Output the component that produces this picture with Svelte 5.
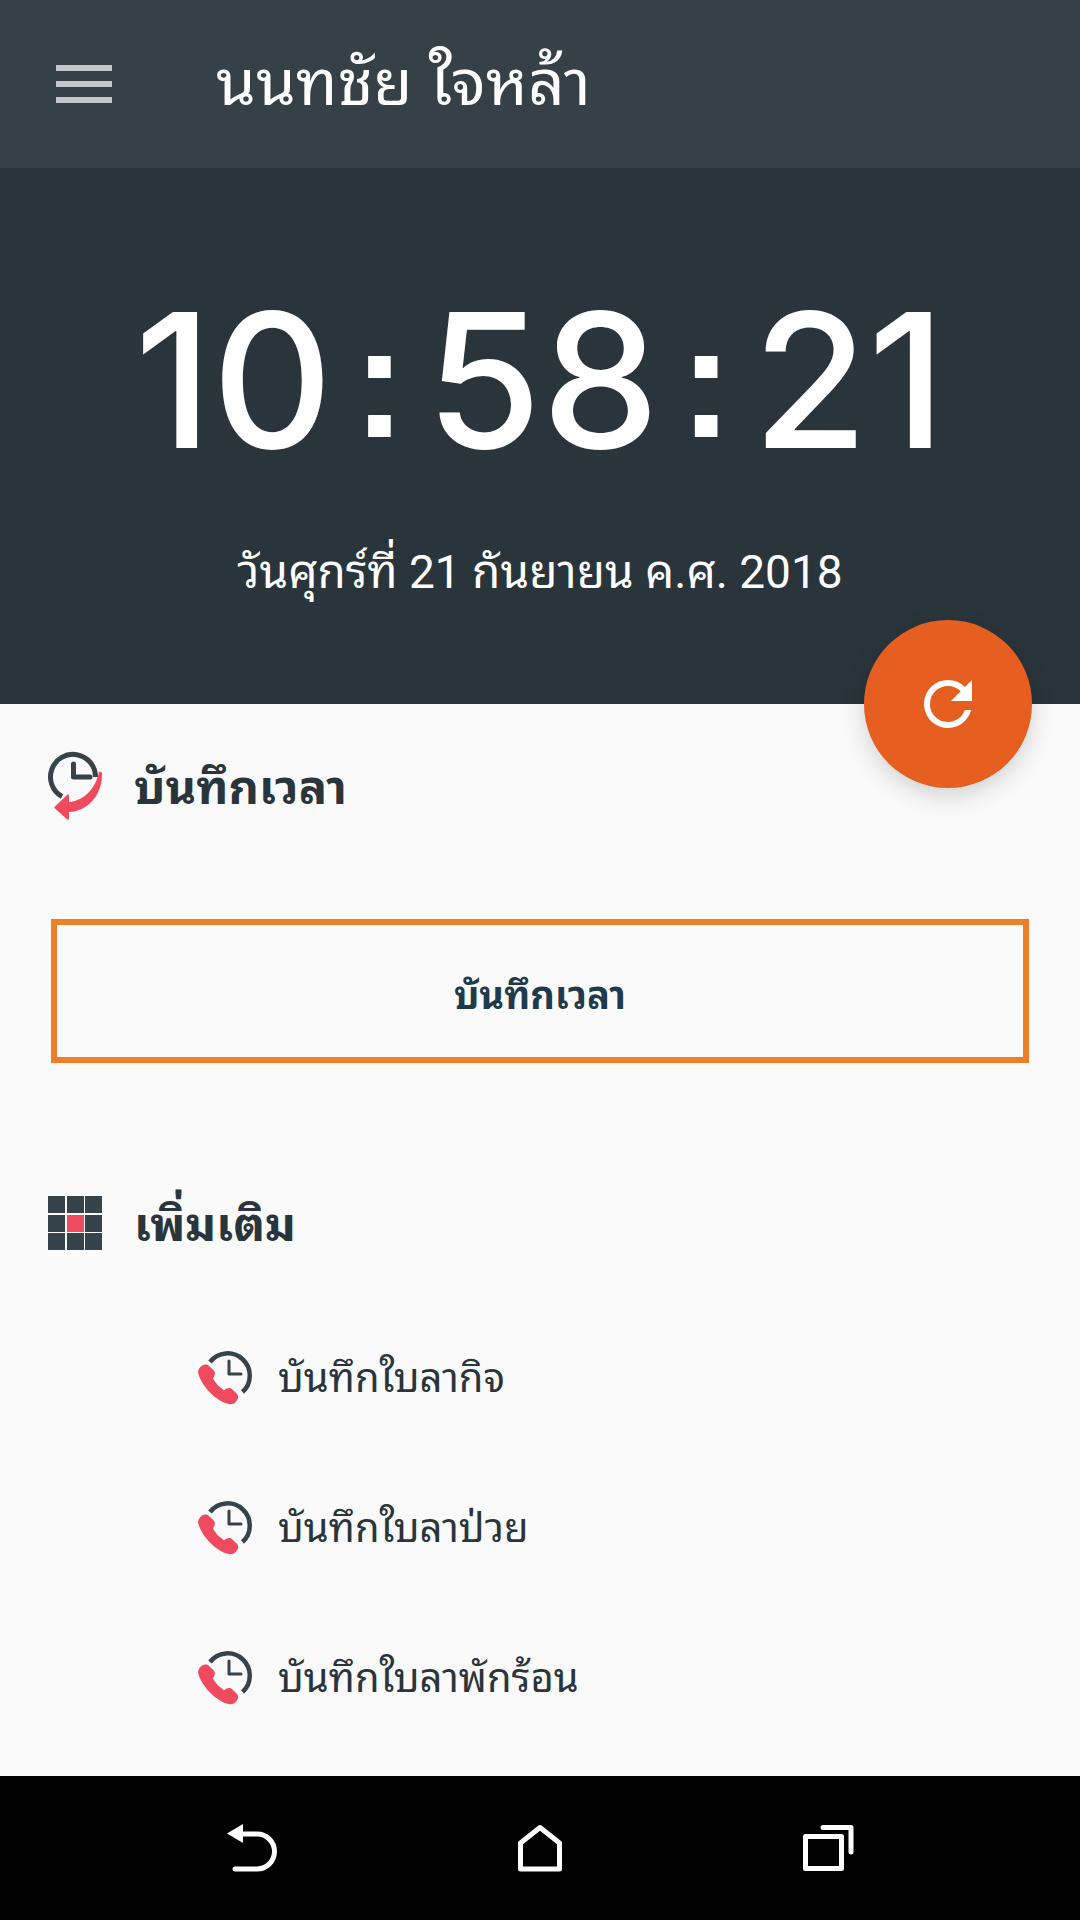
<script lang="ts">
  let { name = 'นนทชัย ใจหล้า' }: { name?: string } = $props();

  let time = $state(['10', '58', '21']);
  const date = 'วันศุกร์ที่ 21 กันยายน ค.ศ. 2018';

  const leaves = [
    { id: 'personal', label: 'บันทึกใบลากิจ' },
    { id: 'sick', label: 'บันทึกใบลาป่วย' },
    { id: 'vacation', label: 'บันทึกใบลาพักร้อน' },
  ];

  function refresh() {
    const now = new Date();
    time = [now.getHours(), now.getMinutes(), now.getSeconds()].map((n) => String(n).padStart(2, '0'));
  }
</script>

<div class="screen">
  <header class="bar">
    <button class="menu" type="button" aria-label="เมนู">
      <svg width="56" height="38" viewBox="0 0 56 38" fill="#c3c7c9">
        <rect width="56" height="6" />
        <rect y="16" width="56" height="6" />
        <rect y="32" width="56" height="6" />
      </svg>
    </button>
    <h1>{name}</h1>
  </header>

  <section class="hero">
    <div class="clock">
      <span>{time[0]}</span><span class="colon">:</span><span>{time[1]}</span><span class="colon">:</span><span>{time[2]}</span>
    </div>
    <p class="date">{date}</p>
    <button class="fab" type="button" aria-label="รีเฟรช" onclick={refresh}>
      <svg width="72" height="72" viewBox="0 0 24 24" fill="#fff">
        <path d="M17.65 6.35A7.96 7.96 0 0 0 12 4a8 8 0 1 0 7.73 10h-2.08A6 6 0 1 1 12 6c1.66 0 3.14.69 4.22 1.78L13 11h7V4l-2.35 2.35z" />
      </svg>
    </button>
  </section>

  <main>
    <h2>
      <svg width="54" height="68" viewBox="0 0 54 68" fill="none">
        <path d="M14 44.500A22.500 22.500 0 1 1 47.500 25" stroke="#36434a" stroke-width="5" />
        <path d="M25.500 12v13H42" stroke="#36434a" stroke-width="5" stroke-linecap="round" stroke-linejoin="round" />
        <path d="M51 20c1-.6 3 0 3 1.500C54.500 42 41 59 21 60v6.500c0 1.200-1 1.500-2 .8L7 56.500c-.8-.7-.8-1.300 0-2L19 43c1-.8 2-.5 2 .8V50c13-1 26-11 30-30z" fill="#f04a5f" />
      </svg>
      <span class="label">บันทึกเวลา</span>
    </h2>

    <button class="checkin" type="button">บันทึกเวลา</button>

    <h2>
      <svg width="54" height="54" viewBox="0 0 54 54">
        {#each [0, 19, 37] as y}
          {#each [0, 19, 37] as x}
            <rect {x} {y} width="17" height="17" fill={x === 19 && y === 19 ? '#f04a5f' : '#36434a'} />
          {/each}
        {/each}
      </svg>
      <span class="label">เพิ่มเติม</span>
    </h2>

    <ul>
      {#each leaves as leave (leave.id)}
        <li>
          <a href="#{leave.id}">
            <svg width="54" height="54" viewBox="0 0 54 54" fill="none">
              <path d="M12 11A22.200 22.200 0 1 1 44.500 41" stroke="#36434a" stroke-width="4.500" />
              <path d="M31 10v13h12" stroke="#36434a" stroke-width="3" stroke-linecap="round" stroke-linejoin="round" />
              <path d="M3 15.500l2-1.400c2-1 4.400-.8 6 .8l4.500 4.400c1.600 1.700 1.800 3.600.8 5.500l-1.300 3c2.800 4.700 6.400 8.500 11 11.500l2.700-1.800c2-1 4-.8 5.500.7l4.600 4.600c1.700 1.700 1.900 4 .5 6l-1.700 2.200c-1.700 2-4.300 2.700-7 2C18 50 4.500 36 .5 23.500c-.9-2.700-.3-5.800 2.500-8z" fill="#f04a5f" />
            </svg>
            <span class="label">{leave.label}</span>
          </a>
        </li>
      {/each}
    </ul>
  </main>

  <nav>
    <button type="button" aria-label="ย้อนกลับ">
      <svg width="54" height="48" viewBox="0 0 54 48" fill="none" stroke="#fff" stroke-width="5">
        <path d="M11 10h21a17.500 17.500 0 0 1 0 35H10" stroke-linecap="round" />
        <path d="M2 9.500L18 0v19z" fill="#fff" stroke="none" />
      </svg>
    </button>
    <button type="button" aria-label="หน้าหลัก">
      <svg width="54" height="48" viewBox="0 0 54 48" fill="none" stroke="#fff" stroke-width="5" stroke-linejoin="round">
        <path d="M7.500 19L27 3.500L46.500 19v26h-39z" />
      </svg>
    </button>
    <button type="button" aria-label="แอปล่าสุด">
      <svg width="54" height="48" viewBox="0 0 54 48" fill="none" stroke="#fff" stroke-width="5" stroke-linejoin="round" stroke-linecap="round">
        <path d="M4.500 12.500h36v32h-36z" />
        <path d="M22 3.500h28V28" />
      </svg>
    </button>
  </nav>
</div>

<style>
  :global(body) { margin: 0; background: #fafafa; }
  .screen {
    display: flex; flex-direction: column; min-height: 100vh;
    font-family: Roboto, "Noto Sans Thai Looped", Loma, "Noto Sans", sans-serif; color: #2a353b;
  }
  button { font-family: inherit; background: none; border: 0; padding: 0; cursor: pointer; }
  svg { display: block; flex: none; overflow: visible; }

  .bar { display: flex; align-items: center; gap: 104px; height: 168px; padding: 0 56px; background: #364147; }
  h1 { margin: 0; font-size: 64px; line-height: 88px; font-weight: 400; color: #fff; }

  .hero {
    position: relative; display: flex; flex-direction: column; align-items: center;
    height: 536px; background: #29353b; color: #fff;
  }
  .clock {
    display: flex; justify-content: center; gap: 20px; margin-top: 108px;
    font-family: Inter, sans-serif; font-size: 187px; line-height: 208px; font-weight: 500;
  }
  .colon { font-family: "Liberation Sans", sans-serif; font-size: 160px; line-height: 212px; font-weight: 700; }
  .date { margin: 48px 0 0; font-size: 46px; line-height: 72px; }
  .fab {
    position: absolute; right: 48px; bottom: -84px; width: 168px; height: 168px;
    display: flex; align-items: center; justify-content: center;
    border-radius: 50%; background: #e65e20; box-shadow: 0 8px 24px rgba(0, 0, 0, 0.16);
  }

  main { flex: 1; padding: 40px 48px 16px; }
  h2 { display: flex; align-items: center; gap: 32px; height: 84px; margin: 0; font-size: 47px; font-weight: 700; }
  .label { padding-bottom: 8px; }
  .checkin {
    display: block; width: calc(100% - 6px); height: 144px; margin: 91px 3px 118px;
    border: 6px solid #ee7f28; font-size: 38px; font-weight: 700; color: #1e3a4c;
  }
  ul { list-style: none; margin: 38px 0 0; padding: 0 0 0 150px; }
  li a { display: flex; align-items: center; gap: 26px; height: 150px; font-size: 40px; color: inherit; text-decoration: none; }

  nav { display: flex; justify-content: center; align-items: center; gap: 234px; height: 144px; background: #000; }
</style>
